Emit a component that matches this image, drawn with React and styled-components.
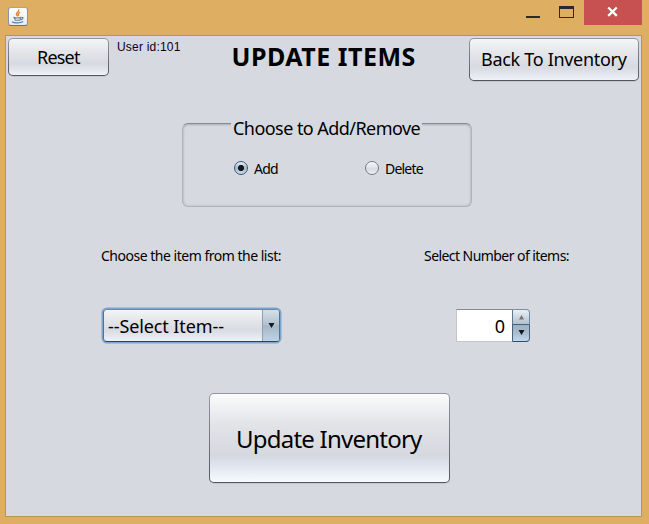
import React, { useState } from "react";
import styled, { createGlobalStyle } from "styled-components";

const PANEL = "#d6d9e0";

const GlobalStyle = createGlobalStyle`
  *, *::before, *::after { box-sizing: border-box; }
  body { margin: 0; overflow: hidden; }
  button { margin: 0; padding: 0; font: inherit; color: inherit; }
`;

const Window = styled.div`
  display: flex;
  flex-direction: column;
  width: 649px;
  height: 524px;
  padding: 0 7px 7px 5px;
  background: #deae63;
  color: #000;
  font-family: "Noto Sans", Tahoma, sans-serif;
`;

const TitleBar = styled.header`
  display: flex;
  align-items: flex-start;
  height: 35px;
  flex: none;
`;

const JavaBadge = styled.span`
  display: flex;
  width: 20px;
  height: 19px;
  margin: 7px auto 0 3px;
  border: 1px solid #8497a5;
  border-color: #a9a596 #8497a5 #58788e;
  border-radius: 3px;
  background: linear-gradient(#fff, #e8ebee);
`;

const WindowButton = styled.button`
  display: flex;
  width: ${(p) => p.$width}px;
  height: 25px;
  border: 0;
  background: ${(p) => (p.$danger ? "#c75050" : "transparent")};
`;

const Panel = styled.main`
  display: flex;
  flex-direction: column;
  height: 482px;
  border: 1px solid #b8935a;
  background: ${PANEL};
`;

const Header = styled.div`
  display: flex;
  align-items: flex-start;
  height: 87px;
  padding: 2px;
`;

const Text = styled.span`
  display: block;
  flex: none;
  font-size: ${(p) => p.$size}px;
  line-height: ${(p) => p.$line}px;
  letter-spacing: ${(p) => p.$track}px;
  white-space: nowrap;
`;

const UserText = styled(Text)`
  margin: 2px 0 0 8px;
  font-family: "Liberation Sans", Arial, sans-serif;
  color: #0a0014;
`;

const Title = styled.h1`
  margin: 1px auto 0 51px;
  font-size: 25px;
  line-height: 34px;
  font-weight: 700;
  letter-spacing: 0.5px;
  white-space: nowrap;
`;

const NimbusButton = styled.button`
  display: flex;
  flex: none;
  align-items: flex-start;
  justify-content: flex-start;
  width: ${(p) => p.$w}px;
  height: ${(p) => p.$h}px;
  padding: ${(p) => p.$pad};
  border: 1px solid transparent;
  border-radius: 5px;
  background:
    ${(p) =>
      p.$large
        ? "linear-gradient(#fafbfc 0%, #e3e4e8 34%, #d5d8df 70%, #e0e4ee 81%, #f7faff 100%)"
        : "linear-gradient(#f4f5f7 0%, #e5e6ea 34%, #d7dae1 68%, #e0e3ea 82%, #f0f2f8 100%)"} padding-box,
    linear-gradient(#95989e, #53565c) border-box;
  box-shadow: 0 1px 0 #c3c6cd;
`;

const Group = styled.section`
  width: 290px;
  height: 84px;
  margin-left: 176px;
  border: 1px solid #b0b3b8;
  border-top-color: #888b90;
  border-radius: 6px;
  box-shadow: inset 0 1px 2px #b0b3b9, inset 0 0 3px #b9bcc2;
`;

const Legend = styled.div`
  width: 191px;
  height: 24px;
  margin: -8px 0 0 48px;
  padding-left: 2px;
  background: ${PANEL};
`;

const RadioRow = styled.div`
  display: flex;
  margin-top: 19px;
  padding-left: 51px;
`;

const RadioLabel = styled.label`
  display: flex;
  width: ${(p) => p.$width}px;
  gap: 6px;
`;

const Radio = styled.input`
  appearance: none;
  flex: none;
  width: 14px;
  height: 14px;
  margin: 2px 0 0;
  border: 1px solid ${(p) => (p.checked ? "#3c566d" : "#777b82")};
  border-radius: 50%;
  background: ${(p) =>
    p.checked
      ? "radial-gradient(circle, #111820 0 2.7px, transparent 3.5px), linear-gradient(#e8f0f7, #a6bacb 50%, #c9dcec)"
      : "linear-gradient(#f9f9fb, #d9dbe1 60%, #f0f3f9)"};
`;

const Captions = styled.div`
  display: flex;
  justify-content: space-between;
  margin-top: 39px;
  padding: 0 72px 0 95px;
`;

const Fields = styled.div`
  display: flex;
  justify-content: space-between;
  height: 35px;
  margin-top: 44px;
  padding: 0 111px 0 97px;
`;

const Combo = styled.button`
  display: flex;
  width: 177px;
  height: 33px;
  border: 1px solid #46607d;
  border-color: #6f87a0 #56708c #2f465e;
  border-radius: 4px;
  background: linear-gradient(#f4f5f7, #e3e5e9 36%, #d8dbe1 65%, #eef1f8);
  box-shadow: 0 0 0 1.5px #7ba6cf;
`;

const ComboText = styled(Text)`
  margin: 4px 0 0 4px;
`;

const ComboArrow = styled.span`
  display: flex;
  align-items: center;
  justify-content: center;
  width: 17px;
  height: 31px;
  margin-left: auto;
  border-left: 1px solid #8ea0b2;
  border-radius: 0 3px 3px 0;
  background: linear-gradient(#d5dfe9, #b2c1cf 48%, #a5b7c8 52%, #c0d3e3);
`;

const Spinner = styled.div`
  display: flex;
  width: 74px;
  height: 33px;
`;

const SpinnerValue = styled.output`
  display: flex;
  width: 56px;
  height: 33px;
  padding: 4px 7px 0 0;
  justify-content: flex-end;
  border: 1px solid #c3c5ca;
  border-top-color: #85888d;
  border-right: 0;
  background: #fff;
`;

const SpinnerButtons = styled.div`
  display: grid;
  grid-template-rows: 16px 17px;
  width: 18px;
`;

const StepButton = styled.button`
  display: flex;
  align-items: center;
  justify-content: center;
  border: 1px solid #48627a;
  border-color: ${(p) => (p.$up ? "#7c8ea0 #7188a0 #48627a #60788f" : "#48627a #48627a #334f68")};
  border-top-width: ${(p) => (p.$up ? 1 : 0)}px;
  border-radius: ${(p) => (p.$up ? "0 4px 0 0" : "0 0 4px 0")};
  padding-bottom: ${(p) => (p.$up ? 0 : 2)}px;
  background: ${(p) =>
    p.$up ? "linear-gradient(#eaf0f5, #b3c1ce)" : "linear-gradient(#9db1c4, #a9bdce 50%, #c3d8ea)"};
`;

const Footer = styled.div`
  display: flex;
  justify-content: center;
  margin-top: 49px;
  padding-left: 12px;
`;

function JavaCup() {
  return (
    <svg width="18" height="17" viewBox="0 0 18 17" fill="none">
      <path d="M9.6 1.6C11 3.8 6.6 4.6 7.4 6.4L8.8 8.4M11.2 4.4C8.4 5.4 9 6.4 9.8 7.8" stroke="#e5822d" strokeWidth="1.4" />
      <path d="M4.4 9.4C6.4 10 10.2 10 12.2 9.4M5.4 10L6.4 12.2H11L11.8 10M12.4 9.2C14.8 9 14.4 11.4 12 11.6" stroke="#5d7f98" strokeWidth="1.1" />
      <path d="M3 13.7C5 15.2 11.5 15.2 14.2 13.5" stroke="#5d7f98" strokeWidth="1.2" />
    </svg>
  );
}

function Arrow({ up, color = "#111820" }) {
  return (
    <svg width="7" height="5" viewBox="0 0 7 5">
      <path d={up ? "M1 4.5L3.5 0L6 4.5Z" : "M0.5 0H6.5L3.5 5Z"} fill={color} />
    </svg>
  );
}

export default function App() {
  const [mode, setMode] = useState("add");
  const [count, setCount] = useState(0);
  return (
    <Window>
      <GlobalStyle />
      <TitleBar>
        <JavaBadge><JavaCup /></JavaBadge>
        <WindowButton $width={33} aria-label="Minimize">
          <svg width="33" height="25"><path d="M0 16H14V18H0Z" fill="#2a2a2a" /></svg>
        </WindowButton>
        <WindowButton $width={25} aria-label="Maximize">
          <svg width="25" height="25">
            <path d="M0 6H15V18H0ZM1 9V17H14V9Z" fill="#2a2a2a" fillRule="evenodd" />
          </svg>
        </WindowButton>
        <WindowButton $width={58} $danger aria-label="Close">
          <svg width="58" height="25"><path d="M24.2 7.5L32.8 15.8M32.8 7.5L24.2 15.8" stroke="#fff" strokeWidth="2.3" /></svg>
        </WindowButton>
      </TitleBar>
      <Panel>
        <Header>
          <NimbusButton $w={101} $h={38} $pad="6px 0 0 28px">
            <Text $size={18} $line={24} $track={-0.8}>Reset</Text>
          </NimbusButton>
          <UserText $size={12} $line={14} $track={0.2}>User id:101</UserText>
          <Title>UPDATE ITEMS</Title>
          <NimbusButton $w={170} $h={43} $pad="8px 0 0 11px">
            <Text $size={18} $line={24} $track={-0.3}>Back To Inventory</Text>
          </NimbusButton>
        </Header>
        <Group>
          <Legend><Text $size={18} $line={24} $track={-0.55}>Choose to Add/Remove</Text></Legend>
          <RadioRow>
            <RadioLabel $width={131}>
              <Radio type="radio" name="mode" checked={mode === "add"} onChange={() => setMode("add")} />
              <Text $size={14} $line={19} $track={-0.8}>Add</Text>
            </RadioLabel>
            <RadioLabel $width={70}>
              <Radio type="radio" name="mode" checked={mode === "delete"} onChange={() => setMode("delete")} />
              <Text $size={14} $line={19} $track={-0.8}>Delete</Text>
            </RadioLabel>
          </RadioRow>
        </Group>
        <Captions>
          <Text $size={14} $line={19} $track={-0.49}>Choose the item from the list:</Text>
          <Text $size={14} $line={19} $track={-0.56}>Select Number of items:</Text>
        </Captions>
        <Fields>
          <Combo>
            <ComboText $size={18} $line={24} $track={-0.1}>--Select Item--</ComboText>
            <ComboArrow><Arrow /></ComboArrow>
          </Combo>
          <Spinner>
            <SpinnerValue><Text $size={18} $line={24} $track={0}>{count}</Text></SpinnerValue>
            <SpinnerButtons>
              <StepButton $up aria-label="Increase" onClick={() => setCount(count + 1)}><Arrow up color="#6f7478" /></StepButton>
              <StepButton aria-label="Decrease" onClick={() => setCount(Math.max(0, count - 1))}><Arrow /></StepButton>
            </SpinnerButtons>
          </Spinner>
        </Fields>
        <Footer>
          <NimbusButton $large $w={241} $h={90} $pad="28px 0 0 26px">
            <Text $size={24} $line={33} $track={-0.77}>Update Inventory</Text>
          </NimbusButton>
        </Footer>
      </Panel>
    </Window>
  );
}
